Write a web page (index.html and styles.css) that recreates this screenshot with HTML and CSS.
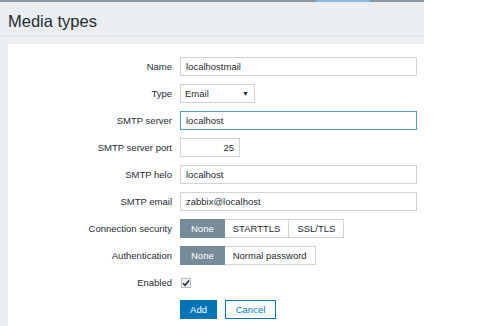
FILE: index.html
```html
<!DOCTYPE html>
<html lang="en">
<head>
    <meta charset="UTF-8">
    <meta name="viewport" content="width=device-width, initial-scale=1.0">
    <title>Media types</title>
    <link rel="stylesheet" href="styles.css">
</head>
<body>

    <div class="page">
        <div class="top-line">
            <span class="seg dark seg-a"></span>
            <span class="seg blue seg-b"></span>
            <span class="seg dark seg-c"></span>
        </div>

        <div class="header">
            <h1>Media types</h1>
        </div>

        <div class="form-box">
            <div class="form-grid">
                <label class="label">Name</label>
                <div class="field"><input class="text-input" type="text" value="localhostmail"></div>

                <label class="label">Type</label>
                <div class="field">
                    <div class="select">
                        <span>Email</span>
                        <span class="arrow">&#9660;</span>
                    </div>
                </div>

                <label class="label">SMTP server</label>
                <div class="field"><input class="text-input focused" type="text" value="localhost"></div>

                <label class="label">SMTP server port</label>
                <div class="field"><input class="text-input port" type="text" value="25"></div>

                <label class="label">SMTP helo</label>
                <div class="field"><input class="text-input" type="text" value="localhost"></div>

                <label class="label">SMTP email</label>
                <div class="field"><input class="text-input" type="text" value="zabbix@localhost"></div>

                <label class="label">Connection security</label>
                <div class="field">
                    <div class="radio-group">
                        <span class="radio active">None</span>
                        <span class="radio">STARTTLS</span>
                        <span class="radio">SSL/TLS</span>
                    </div>
                </div>

                <label class="label">Authentication</label>
                <div class="field">
                    <div class="radio-group">
                        <span class="radio active">None</span>
                        <span class="radio">Normal password</span>
                    </div>
                </div>

                <label class="label">Enabled</label>
                <div class="field check-row">
                    <span class="checkbox">
                        <svg width="8" height="8" viewBox="0 0 8 8">
                            <path d="M1 4.2 L3 6.3 L7 1.4" fill="none" stroke="#2b3338" stroke-width="1.6"/>
                        </svg>
                    </span>
                </div>

                <span></span>
                <div class="field buttons">
                    <button class="btn btn-add">Add</button>
                    <button class="btn btn-cancel">Cancel</button>
                </div>
            </div>
        </div>
    </div>

</body>
</html>
```

FILE: styles.css
```css
body {
    font-family: 'Liberation Sans', Arial, sans-serif;
    background-color: #fff;
    margin: 0;
    padding: 0;
    color: #1f2c33;
    font-size: 9.5px;
}

.page {
    width: 424px;
    height: 326px;
    background-color: #ebeef0;
    display: flex;
    flex-direction: column;
}

.top-line {
    display: flex;
    height: 2px;
}

.seg {
    display: block;
    height: 100%;
}

.seg.dark {
    background-color: #8a9aa5;
}

.seg.blue {
    background-color: #86bbe0;
}

.seg-a {
    width: 316px;
}

.seg-b {
    width: 54px;
}

.seg-c {
    flex: 1;
}

.header {
    padding: 10px 0 4px 8px;
    border-bottom: 1px solid #dfe3e6;
    margin-bottom: 8px;
}

h1 {
    margin: 0;
    font-size: 16.5px;
    line-height: 19px;
    font-weight: normal;
    color: #1f2c33;
}

.form-box {
    flex: 1;
    background-color: #fff;
    margin-left: 8px;
    padding-top: 13px;
}

.form-grid {
    display: grid;
    grid-template-columns: 164px 1fr;
    column-gap: 8px;
    row-gap: 8px;
    align-items: center;
}

.label {
    text-align: right;
    line-height: 19px;
    color: #1f2c33;
}

.field {
    display: flex;
    align-items: center;
}

.text-input {
    box-sizing: border-box;
    width: 237px;
    height: 19px;
    border: 1px solid #cdd3d7;
    padding: 0 5px;
    font-family: inherit;
    font-size: 9.5px;
    color: #1f2c33;
    outline: none;
    margin: 0;
}

.text-input.focused {
    border-color: #4f9bcc;
}

.text-input.port {
    width: 60px;
    text-align: right;
}

.select {
    box-sizing: border-box;
    width: 75px;
    height: 19px;
    border: 1px solid #cdd3d7;
    padding: 0 5px 0 4px;
    display: flex;
    align-items: center;
    justify-content: space-between;
}

.select .arrow {
    font-size: 7px;
    color: #1f2c33;
}

.radio-group {
    display: flex;
    height: 19px;
}

.radio {
    box-sizing: border-box;
    height: 19px;
    line-height: 17px;
    padding: 0 8px;
    border: 1px solid #cdd3d7;
    border-left: none;
    color: #1f2c33;
}

.radio:first-child {
    border-left: 1px solid #cdd3d7;
}

.radio.active {
    background-color: #768d99;
    border-color: #768d99;
    color: #fff;
    padding: 0 10px;
}

.check-row {
    height: 15px;
    padding-left: 1px;
}

.checkbox {
    box-sizing: border-box;
    width: 10px;
    height: 10px;
    border: 1px solid #b5bdc2;
    background-color: #eceeef;
    display: flex;
    align-items: center;
    justify-content: center;
}

.buttons {
    gap: 8px;
}

.btn {
    box-sizing: border-box;
    height: 19px;
    padding: 0 9px;
    border: 1px solid #0275b8;
    font-family: inherit;
    font-size: 9.5px;
    cursor: pointer;
    margin: 0;
}

.btn-add {
    background-color: #0275b8;
    color: #fff;
    width: 37px;
}

.btn-cancel {
    background-color: #fff;
    color: #0275b8;
    width: 51px;
}
```
